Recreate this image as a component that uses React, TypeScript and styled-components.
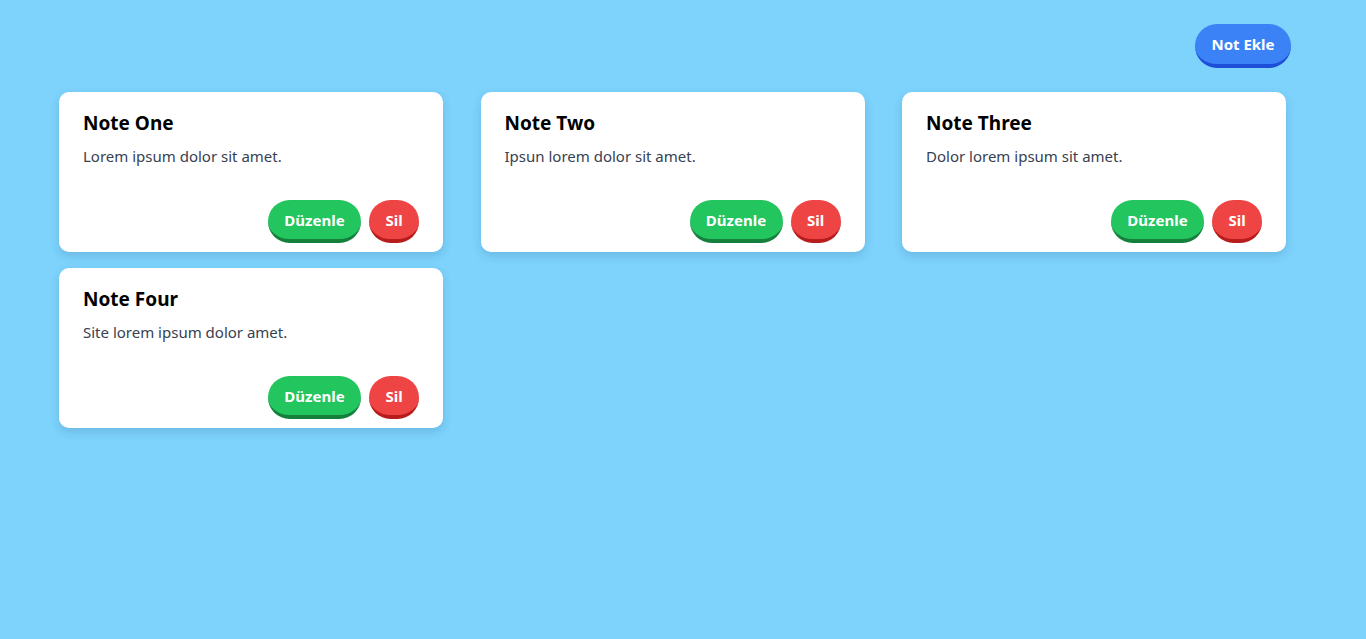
import React from "react";
import styled, { createGlobalStyle } from "styled-components";

const Global = createGlobalStyle`
  html, body { margin: 0; padding: 0; }
  body {
    background: #7dd3fc;
    font-family: "Noto Sans", "Open Sans", sans-serif;
    min-height: 639px;
  }
`;

const Page = styled.div`
  padding: 24px 75px 24px 59px;
`;

const Header = styled.div`
  display: flex;
  justify-content: flex-end;
  margin-bottom: 24px;
`;

const Grid = styled.div`
  display: grid;
  width: 1227px;
  grid-template-columns: repeat(3, 384px);
  justify-content: space-between;
  row-gap: 16px;
`;

const Card = styled.div`
  background: #ffffff;
  border-radius: 10px;
  height: 160px;
  box-sizing: border-box;
  padding: 17px 24px 9px 24px;
  display: flex;
  flex-direction: column;
  box-shadow: 0 4px 10px rgba(30, 64, 110, 0.18);
`;

const Title = styled.h2`
  margin: 0;
  font-size: 19px;
  line-height: 28px;
  font-weight: 700;
  color: #000;
`;

const Body = styled.p`
  margin: 8px 0 0;
  font-size: 15px;
  line-height: 22px;
  color: #374151;
`;

const Actions = styled.div`
  margin-top: auto;
  display: flex;
  justify-content: flex-end;
  gap: 8px;
`;

const Button = styled.button<{ $bg: string; $edge: string }>`
  font-family: "Noto Sans", "Open Sans", sans-serif;
  font-weight: 700;
  font-size: 15px;
  color: #fff;
  background: ${(p) => p.$bg};
  border: none;
  border-bottom: 4px solid ${(p) => p.$edge};
  border-radius: 999px;
  height: 43px;
  padding: 0 16px;
  cursor: pointer;
  display: flex;
  align-items: center;
  justify-content: center;
`;

const AddButton = styled(Button)`
  height: 44px;
  padding: 0 16px;
  width: 96px;
`;

const notes = [
  { title: "Note One", body: "Lorem ipsum dolor sit amet." },
  { title: "Note Two", body: "Ipsun lorem dolor sit amet." },
  { title: "Note Three", body: "Dolor lorem ipsum sit amet." },
  { title: "Note Four", body: "Site lorem ipsum dolor amet." },
];

export default function App() {
  return (
    <>
      <Global />
      <Page>
        <Header>
          <AddButton $bg="#3b82f6" $edge="#1d4ed8">Not Ekle</AddButton>
        </Header>
        <Grid>
          {notes.map((n) => (
            <Card key={n.title}>
              <Title>{n.title}</Title>
              <Body>{n.body}</Body>
              <Actions>
                <Button $bg="#22c55e" $edge="#15803d" style={{ width: 93 }}>Düzenle</Button>
                <Button $bg="#ef4444" $edge="#b91c1c" style={{ width: 50 }}>Sil</Button>
              </Actions>
            </Card>
          ))}
        </Grid>
      </Page>
    </>
  );
}
